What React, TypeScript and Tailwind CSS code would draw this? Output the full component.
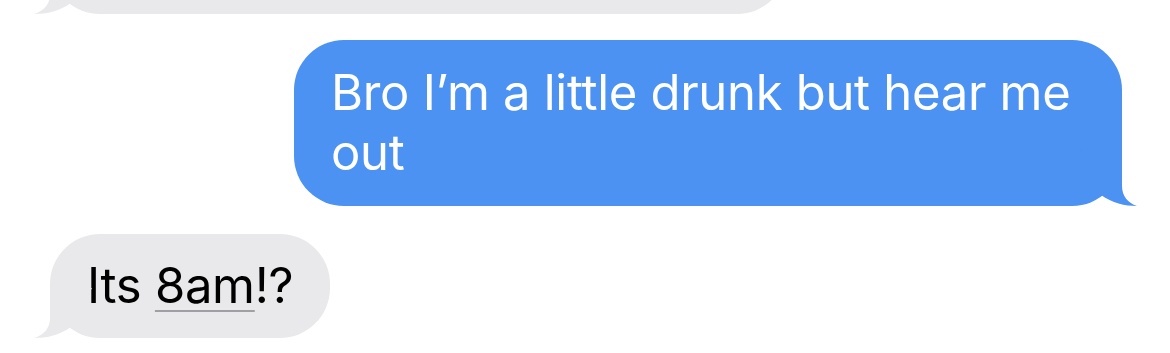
import React from "react";

const BLUE = "#4b92f2";
const GRAY = "#e9e9eb";

function TailRight({ color }: { color: string }) {
  return (
    <svg
      className="absolute bottom-0 right-[-18px]"
      width="60"
      height="70"
      viewBox="0 0 60 70"
    >
      <path
        d="M42 10 L42 50 C42 60 48 67 57 70 C45 70 32 67 21 59 L0 14 Z"
        fill={color}
      />
    </svg>
  );
}

function TailLeft({ color }: { color: string }) {
  return (
    <svg
      className="absolute bottom-0 left-[-18px]"
      width="60"
      height="70"
      viewBox="0 0 60 70"
    >
      <path
        d="M18 20 L18 50 C18 60 12 67 2 70 C15 70 28 67 39 59 L60 20 Z"
        fill={color}
      />
    </svg>
  );
}

export default function App() {
  return (
    <div
      className="w-[1170px] h-[353px] overflow-hidden bg-white flex flex-col"
      style={{ fontFamily: "Inter, 'Noto Sans', sans-serif" }}
    >
      {/* top cut-off received bubble */}
      <div className="relative ml-[50px] mt-[-90px] w-[737px] h-[104px] rounded-[50px] bg-[#e9e9eb] shrink-0">
        <TailLeft color={GRAY} />
      </div>

      {/* sent bubble */}
      <div className="flex justify-end mr-[48px] mt-[26px]">
        <div className="relative w-[828px] rounded-[50px] bg-[#4b92f2] pl-[37px] pr-[30px] pt-[23px] pb-[23px] text-white text-[49px] leading-[60px] tracking-[-0.3px]">
          <span className="relative">Bro I’m a little drunk but hear me out</span>
          <TailRight color={BLUE} />
        </div>
      </div>

      {/* received bubble */}
      <div className="flex mt-[28px] ml-[50px]">
        <div className="relative rounded-[50px] bg-[#e9e9eb] pl-[37px] pr-[37px] pt-[22px] pb-[22px] text-black text-[49px] leading-[60px] tracking-[-0.3px]">
          <span className="relative">
            Its{" "}
            <span className="underline decoration-[#a0a0a4] decoration-2 underline-offset-[7px]">
              8am
            </span>
            !?
          </span>
          <TailLeft color={GRAY} />
        </div>
      </div>
    </div>
  );
}
